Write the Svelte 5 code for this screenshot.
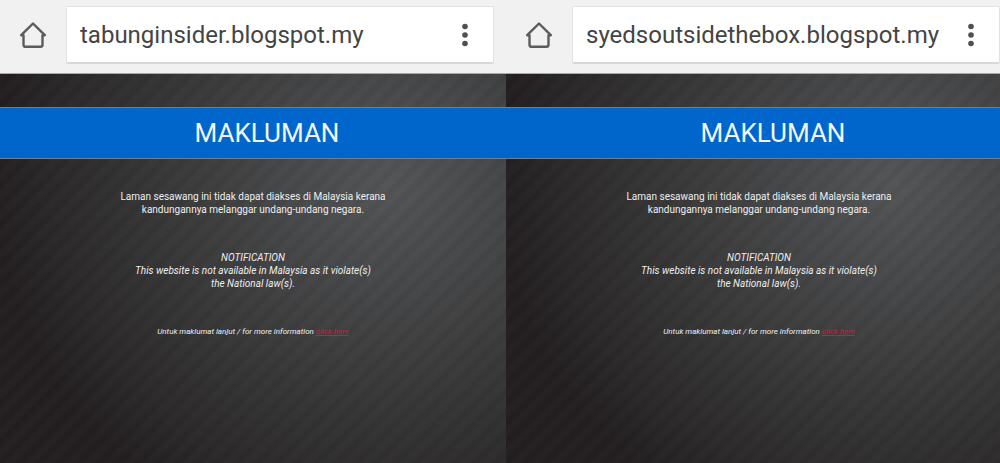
<script lang="ts">
    type Screen = { id: string; address: string };

    let screens = $state<Screen[]>([
        { id: "left", address: "tabunginsider.blogspot.my" },
        { id: "right", address: "syedsoutsidethebox.blogspot.my" }
    ]);
</script>

<main class="screens">
    {#each screens as screen (screen.id)}
        <section class="screen">
            <header class="toolbar">
                <button class="icon-btn" type="button" aria-label="Home">
                    <svg class="home" viewBox="0 0 26 26" aria-hidden="true">
                        <path d="M1.200 13.200 13 1.500l11.800 11.700H22.500V22.800Q22.500 24.800 20.500 24.800H5.500Q3.500 24.800 3.500 22.800V13.200Z" />
                    </svg>
                </button>
                <div class="omnibox">
                    <input
                        class="address"
                        type="text"
                        aria-label="Address"
                        spellcheck="false"
                        bind:value={screen.address}
                    />
                    <button class="icon-btn" type="button" aria-label="Menu">
                        <svg class="dots" viewBox="0 0 6 24" aria-hidden="true">
                            <circle cx="3" cy="3.500" r="2.800" />
                            <circle cx="3" cy="12" r="2.800" />
                            <circle cx="3" cy="20.500" r="2.800" />
                        </svg>
                    </button>
                </div>
            </header>

            <article class="page">
                <h1 class="banner">MAKLUMAN</h1>
                <div class="notice">
                    <p>
                        Laman sesawang ini tidak dapat diakses di Malaysia kerana<br />
                        kandungannya melanggar undang-undang negara.
                    </p>
                    <p class="english">
                        NOTIFICATION<br />
                        This website is not available in Malaysia as it violate(s)<br />
                        the National law(s).
                    </p>
                    <p class="more">
                        Untuk maklumat lanjut / for more information
                        <a href="#info">click here</a>
                    </p>
                </div>
            </article>
        </section>
    {/each}
</main>

<style>
    :global(body) {
        margin: 0;
        background: #231f20;
    }

    .screens {
        display: flex;
        min-height: 100vh;
        overflow: hidden;
        font-family: Roboto, "Liberation Sans", sans-serif;
    }

    /* the second screen runs a little past the window edge */
    .screen {
        flex: 0 0 50.6%;
        display: flex;
        flex-direction: column;
        min-width: 0;
    }

    .toolbar {
        display: flex;
        align-items: center;
        box-sizing: border-box;
        height: 74px;
        padding: 0 12px 4px 20px;
        gap: 20px;
        background: #f1f1f1;
        border-bottom: 1px solid #a8a8a8;
    }

    .icon-btn {
        display: flex;
        justify-content: center;
        padding: 0;
        border: none;
        background: none;
        cursor: pointer;
    }

    .home {
        width: 26px;
        height: 26px;
        fill: none;
        stroke: #5c5c5c;
        stroke-width: 2.4;
        stroke-linejoin: round;
    }

    .omnibox {
        flex: 1;
        display: flex;
        align-items: center;
        box-sizing: border-box;
        height: 58px;
        min-width: 0;
        padding: 2px 25px 0 13px;
        background: #fff;
        border: 1px solid #e2e2e2;
        border-bottom: 2px solid #d8d8d8;
        border-radius: 2px;
    }

    .address {
        flex: 1;
        min-width: 0;
        padding: 0;
        border: none;
        outline: none;
        background: none;
        color: #444;
        font-family: inherit;
        font-size: 24px;
        line-height: 32px;
    }

    .dots {
        width: 6px;
        height: 24px;
        fill: #505050;
    }

    .page {
        flex: 1;
        padding-top: 33px;
        background:
            repeating-linear-gradient(
                135deg,
                rgba(255, 255, 255, 0.01) 0 4px,
                rgba(0, 0, 0, 0.03) 8px 10px,
                rgba(255, 255, 255, 0.01) 14px
            ),
            radial-gradient(
                ellipse 78% 96% at 77% 28%,
                #535456 0%,
                #464748 28%,
                #373637 60%,
                #2b292a 84%,
                #231f20 100%
            );
    }

    .banner {
        margin: 0;
        padding-left: 28px;
        border: 1px solid #7c7c7c;
        border-width: 1px 0;
        background: #0066cc;
        color: #f2f6fc;
        font-size: 26px;
        font-weight: 400;
        line-height: 50px;
        text-align: center;
    }

    .notice {
        padding-top: 31px;
        color: #eee;
        font-size: 10px;
        line-height: 13px;
        text-align: center;
    }

    .notice p {
        margin: 0 0 35px;
    }

    .english,
    .more {
        font-style: italic;
    }

    .notice .more {
        margin: 0;
        font-size: 8px;
    }

    .more a {
        color: #dc1436;
    }
</style>
